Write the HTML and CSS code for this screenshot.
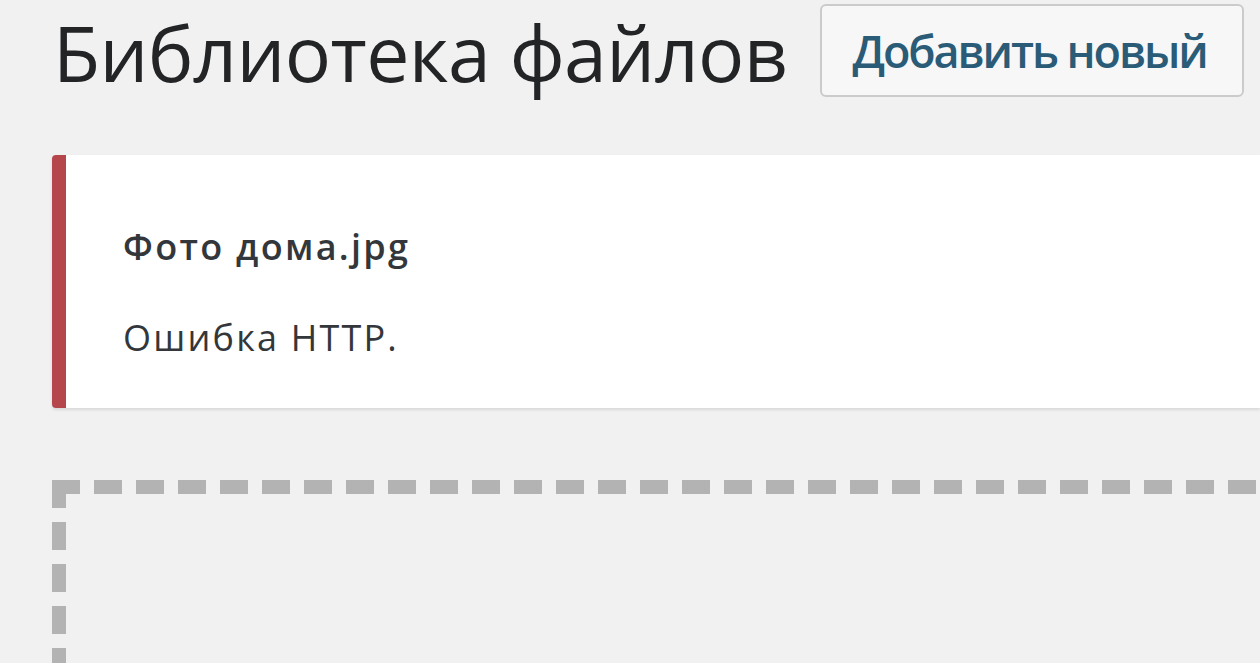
FILE: index.html
```html
<!DOCTYPE html>
<html lang="ru">
<head>
<meta charset="utf-8">
<title>Библиотека файлов</title>
<link rel="stylesheet" href="styles.css">
</head>
<body>
<div class="wrap">
  <div class="page-header">
    <h1 class="page-title">Библиотека файлов</h1>
    <a class="add-new" href="#">Добавить новый</a>
  </div>
  <div class="notice notice-error">
    <p class="file-name">Фото дома.jpg</p>
    <p class="error-msg">Ошибка HTTP.</p>
  </div>
  <div class="dropzone"></div>
</div>
</body>
</html>
```
FILE: styles.css
```css
html, body {
  margin: 0;
  padding: 0;
  background: #f1f1f1;
  overflow: hidden;
}
body {
  width: 1260px;
  height: 663px;
  font-family: "Open Sans", "Noto Sans", sans-serif;
  color: #23282d;
}
.wrap {
  padding-left: 52px;
}
.page-header {
  display: flex;
  align-items: flex-start;
  height: 100px;
  white-space: nowrap;
}
.page-title {
  flex-shrink: 0;
  margin: 0 0 0 1px;
  padding-right: 4px;
  font-size: 77px;
  font-weight: 400;
  line-height: normal;
  color: #222426;
  letter-spacing: -0.6px;
}
.add-new {
  flex-shrink: 0;
  box-sizing: border-box;
  margin: 4px 0 0 29px;
  height: 93px;
  display: flex;
  align-items: center;
  padding: 0 35px 0 30px;
  border: 2px solid #cbcbcb;
  border-radius: 6px;
  background: #f7f7f7;
  color: #2b5c77;
  font-size: 45px;
  font-weight: 600;
  letter-spacing: -2.1px;
  text-decoration: none;
}
.notice {
  margin-top: 55px;
  box-sizing: border-box;
  height: 253px;
  background: #ffffff;
  border-left: 14px solid #b5474c;
  border-radius: 4px 0 0 4px;
  box-shadow: 0 2px 3px rgba(0, 0, 0, 0.1);
  padding: 69px 0 0 57px;
}
.notice p {
  margin: 0;
  font-size: 36px;
  line-height: 46px;
  color: #33373b;
  white-space: nowrap;
}
.file-name {
  font-weight: 600;
  letter-spacing: 2.3px;
}
.error-msg {
  margin-top: 45px !important;
  letter-spacing: 2.2px;
}
.dropzone {
  margin-top: 72px;
  height: 200px;
  background:
    repeating-linear-gradient(to right, #b3b3b3 0 28px, transparent 28px 42px) top left / 100% 14px no-repeat,
    repeating-linear-gradient(to bottom, #b3b3b3 0 28px, transparent 28px 42px) top left / 14px 100% no-repeat;
}
```
